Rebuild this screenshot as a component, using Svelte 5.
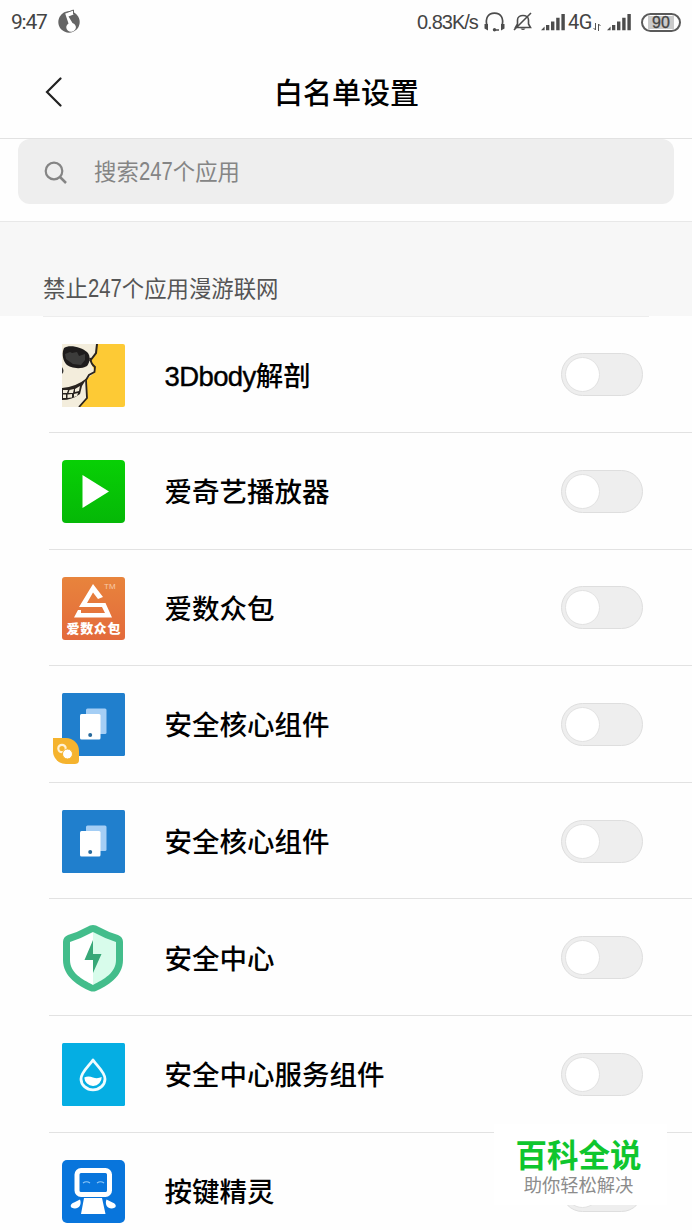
<script>
  let apps = $state([
    { name: '解剖', latin: '3Dbody', icon: 'skull', on: false },
    { name: '爱奇艺播放器', icon: 'play', on: false },
    { name: '爱数众包', icon: 'crowd', on: false },
    { name: '安全核心组件', icon: 'core', badge: true, on: false },
    { name: '安全核心组件', icon: 'core', on: false },
    { name: '安全中心', icon: 'shield', on: false },
    { name: '安全中心服务组件', icon: 'drop', on: false },
    { name: '按键精灵', icon: 'robot', on: false }
  ]);
</script>

{#snippet signal()}
  <svg class="signal" viewBox="0 0 24 18" width="24" height="18">
    <path d="M0 17.2 3.6 13.5v3.7zM5 12h3.3v5.200H5zM10 8.500h3.400v8.700H10zM15.200 4.700h3.400v12.500h-3.400zM20.400 1h3.400v16.200h-3.400z" fill="#4c4c4c" />
  </svg>
{/snippet}

{#snippet appIcon(kind)}
  <svg viewBox="0 0 63 63" width="63" height="63">
    {#if kind === 'skull'}
      <rect width="63" height="63" rx="2" fill="#fdca35" />
      <path d="M0 0H35L33 11 28 17 33 28 24 36 25 54 17 63H0z" fill="#f3eddc" />
      <path d="M35 0 34 9 28 17" fill="none" stroke="#29231f" stroke-width="2" />
      <path d="M28 14Q29 20 33 23L32.500 28 27 31 24 36 25 54 17 63" fill="none" stroke="#29231f" stroke-width="1.800" />
      <path d="M2 4C7 0 20 3 25 8 29 12 28 18 25 22 18 26 8 24 4 20 0 15 0 8 2 4z" fill="#1e1c1c" />
      <path d="M3 10 8 8l2 1 5-1 2 4 6-2v6l-4 5-8-1-7-5z" fill="#3c3c3b" />
      <path d="M0 23q3 4 0 7z" fill="#333" />
      <path d="M0 44Q14 43 25 34L20 42 18 50Q10 56 0 56z" fill="#28231f" />
      <path d="M1 46h5l-1 3H1zM7.500 46l4.500-1-1 4H6.500zM13 45l5-3-1 5-4 1zM1 50.500h3V54H1zM5.500 50.500l4.500-.5v3.500L5.500 54zM12 50l4-1-1 3-3 1z" fill="#f3eddc" />
    {:else if kind === 'play'}
      <defs>
        <linearGradient id="playFill" x2="0" y2="1">
          <stop stop-color="#08d005" /><stop offset="1" stop-color="#05b807" />
        </linearGradient>
      </defs>
      <rect width="63" height="63" rx="4" fill="url(#playFill)" />
      <path d="M20.5 15v33L47 31.5z" fill="#fff" />
    {:else if kind === 'crowd'}
      <defs>
        <linearGradient id="crowdFill" x2="0" y2="1">
          <stop stop-color="#e8843c" /><stop offset="1" stop-color="#e36a3c" />
        </linearGradient>
      </defs>
      <rect width="63" height="63" rx="3" fill="url(#crowdFill)" />
      <path d="M41 20 31 7 17 30H40L43 36H19V33H16L12 40.500H50L43.500 26H25L31 15.500 36 22z" fill="#fff" />
      <text x="42" y="12" class="tm">TM</text>
      <text x="4.5" y="56" class="crowd-name" textLength="54">爱数众包</text>
    {:else if kind === 'core'}
      <rect width="63" height="63" rx="1.5" fill="#207fcd" />
      <rect x="24" y="15.5" width="20.5" height="25.5" rx="1.5" fill="#a4cef5" />
      <rect x="18" y="21" width="20.5" height="25.5" rx="1.5" fill="#fff" />
      <circle cx="28.2" cy="42" r="2" fill="#286a9c" />
    {:else if kind === 'drop'}
      <rect width="63" height="63" rx="1.5" fill="#05aee3" />
      <path d="M31 17C27 23 19 29 19 36a12 10.800 0 0 0 24 0C43 29 35 23 31 17z" fill="none" stroke="#f0fcff" stroke-width="2.800" stroke-linejoin="round" />
      <path d="M22.300 34.500q4-2 8.700 0 4.500 1.500 8.700-.5a8.700 8.700 0 0 1-17.400.5z" fill="#fff" />
    {:else if kind === 'robot'}
      <rect width="63" height="63" rx="5" fill="#0875dc" />
      <rect x="15" y="10.500" width="32.500" height="24" rx="4" fill="none" stroke="#fff" stroke-width="5" />
      <path d="M21 23q3.500-2.500 7 0M35 23q3.500-2.500 7 0" fill="none" stroke="#91c9f7" stroke-width="1.200" />
      <path d="M22 38H40L43.500 54H19zM18 39.500c2 5-1 9-5 9-5 0-6-4-1-6zM44.500 39.500c-2 5 1 9 5 9 5 0 6-4 1-6z" fill="#fff" />
    {/if}
  </svg>
{/snippet}

{#snippet shieldIcon()}
  <svg viewBox="0 0 63 70" width="63" height="70">
    <path d="M31 2Q34 2 37 4 46 9 56 12 61 14 61 19V37C61 54 45 63 34 68Q31 69 28 68C17 63 1 54 1 37V19Q1 14 6 12 16 9 25 4 28 2 31 2z" fill="#43bd8b" />
    <path d="M31 9Q20 15 8 19V37C8 50 20 56 31 62z" fill="#fff" />
    <path d="M31 9Q42 15 54 19V37C54 50 42 56 31 62z" fill="#d8fceb" />
    <path d="M31 17 22.500 37H31V50L39.500 31H31z" fill="#38a878" />
  </svg>
{/snippet}

<div class="screen">
  <div class="status">
    <span class="time">9:47</span>
    <svg class="music" viewBox="0 0 23 24" width="23" height="24">
      <circle cx="11" cy="13" r="10.700" fill="#646464" />
      <path d="M7 4 15.500 1.200V5.500L10.500 7.500 14.500 14A4.800 4.500 0 1 1 10.500 14.500z" fill="#fff" />
      <path d="M7 4.200 15.500 1v4" fill="none" stroke="#646464" stroke-width="1" />
    </svg>
    <span class="speed">0.83K/s</span>
    <svg class="headset" viewBox="0 0 21 20" width="21" height="20">
      <path d="M3 14C1 6 4 1.200 10.500 1.200S20 6 18 14M15 18H10" fill="none" stroke="#4c4c4c" stroke-width="1.700" />
      <path d="M.5 12h3.500v6.500L.5 16.500zM20.500 12H17v6.500l3.500-2z" fill="#4c4c4c" />
      <circle cx="10.500" cy="17.700" r="1.700" fill="#4c4c4c" />
    </svg>
    <svg class="bell" viewBox="0 0 20 20" width="20" height="20">
      <path d="M2.500 15.500H17.500L15.500 12V8C15.500 2 4.500 2 4.500 8v4zM1 18 18 1" fill="none" stroke="#4c4c4c" stroke-width="1.600" />
      <path d="M7.500 16.500h5q-2.500 3-5 0z" fill="#4c4c4c" />
    </svg>
    {@render signal()}
    <span class="network">4G</span>
    <svg class="arrows" viewBox="0 0 8 8" width="8" height="8">
      <path d="M2.500 0v7L.5 5M5.500 8V1l2 2" fill="none" stroke="#555" />
    </svg>
    {@render signal()}
    <span class="battery"><span>90</span></span>
  </div>

  <header>
    <svg class="back" viewBox="0 0 18 30" width="18" height="30">
      <path d="M15.500 1.500 2 15 15.500 28.500" fill="none" stroke="#222" stroke-width="2.200" stroke-linecap="round" />
    </svg>
    <h1>白名单设置</h1>
  </header>

  <div class="search-area">
    <div class="search">
      <svg viewBox="0 0 24 24" width="24" height="24">
        <circle cx="10" cy="10" r="8.300" fill="none" stroke="#858585" stroke-width="2.200" />
        <path d="m16 16 6 6" stroke="#858585" stroke-width="2.500" />
      </svg>
      <span>搜索<b>247</b>个应用</span>
    </div>
  </div>

  <div class="section"><p>禁止<b>247</b>个应用漫游联网</p></div>

  <ul>
    {#each apps as app}
      <li>
        <div class="icon">
          {#if app.icon === 'shield'}
            {@render shieldIcon()}
          {:else}
            {@render appIcon(app.icon)}
          {/if}
          {#if app.badge}
            <svg class="badge" viewBox="0 0 26 26" width="26" height="26">
              <path d="M0 0H13A13 13 0 0 1 26 13V22Q26 26 22 26H13A13 13 0 0 1 0 13z" fill="#f5b32e" />
              <circle cx="9" cy="10.500" r="3.700" fill="none" stroke="#fff1d3" stroke-width="2.200" />
              <circle cx="14.500" cy="16" r="5" fill="#fff" stroke="#f5b32e" />
            </svg>
          {/if}
        </div>
        <span class="name">{#if app.latin}<i>{app.latin}</i>{/if}{app.name}</span>
        <button class="switch" class:on={app.on} role="switch" aria-checked={app.on} aria-label={app.name} onclick={() => (app.on = !app.on)}>
          <span></span>
        </button>
      </li>
    {/each}
  </ul>

  <div class="watermark">
    <strong>百科全说</strong>
    <span>助你轻松解决</span>
  </div>
</div>

<style>
  :global(body) {
    background: #fff;
    overflow: hidden;
  }

  .screen {
    position: relative;
    width: 692px;
    height: 1230px;
    overflow: hidden;
    font-family: "Liberation Sans", "Noto Sans CJK SC", sans-serif;
    color: #000;
    background: #fefefe;
  }

  .status {
    display: flex;
    align-items: center;
    height: 44px;
    padding: 0 11px;
    font-family: Roboto, sans-serif;
    font-size: 21px;
    color: #444;
  }

  .time {
    width: 47px;
    letter-spacing: -1.2px;
  }

  .music {
    margin-top: -2px;
  }

  .speed {
    margin-left: auto;
    width: 67px;
    white-space: nowrap;
    font-size: 20px;
    letter-spacing: -1px;
    font-family: "Liberation Sans", sans-serif;
  }

  .headset,
  .bell {
    margin-right: 8px;
  }

  .network {
    margin-left: 3px;
    width: 25px;
    font-size: 20px;
    letter-spacing: -0.5px;
  }

  .arrows {
    margin: 10px 6px 0 0;
  }

  .battery {
    box-sizing: border-box;
    width: 40px;
    height: 19px;
    margin-left: 10px;
    padding: 1px 5px;
    border: 2px solid #5a5a5a;
    border-radius: 10px;
  }

  .battery span {
    display: block;
    background: #cacaca;
    font-family: "Liberation Sans", sans-serif;
    font-size: 16px;
    line-height: 13px;
    text-align: center;
    -webkit-text-stroke: 0.3px;
  }

  header {
    display: flex;
    align-items: center;
    box-sizing: border-box;
    height: 95px;
    padding: 2px 45px 0;
    border-bottom: 1px solid #e2e2e2;
  }

  h1 {
    flex: 1;
    margin: -3px 17px 0 0;
    font-size: 29px;
    font-weight: 500;
    text-align: center;
  }

  .search-area {
    box-sizing: border-box;
    height: 83px;
    padding: 0 18px;
    border-bottom: 1px solid #e8e8e8;
  }

  .search {
    display: flex;
    align-items: center;
    gap: 26px;
    height: 65px;
    padding-left: 26px;
    border-radius: 12px;
    background: #eee;
    font-size: 22.4px;
    color: #858585;
  }

  .search svg {
    margin-top: 2px;
  }

  .search span {
    margin-top: -3px;
  }

  /* Digits are narrower and a little taller than the Latin face gives */
  b {
    display: inline-block;
    width: 34px;
    font-size: 25px;
    font-weight: inherit;
    line-height: 1;
    white-space: nowrap;
    transform: scaleX(0.81);
    transform-origin: left;
  }

  .section {
    box-sizing: border-box;
    height: 94px;
    padding: 0 43px;
    background: #f7f7f7;
    font-size: 22.4px;
    line-height: 136px;
    color: #555;
  }

  .section p {
    box-sizing: border-box;
    height: 95px;
    margin: 0;
    border-bottom: 1px solid #ededed;
  }

  ul {
    margin: 0;
    padding: 0 0 0 49px;
    list-style: none;
  }

  li {
    display: flex;
    align-items: center;
    box-sizing: border-box;
    height: 116.6px;
    padding: 1px 49px 0 13px;
    border-bottom: 1px solid #e2e2e2;
  }

  li:first-child {
    height: 117px;
  }

  .icon {
    position: relative;
    display: flex;
    width: 63px;
    margin: 1px 39.5px 0 0;
  }

  .badge {
    position: absolute;
    left: -9px;
    bottom: -8px;
  }

  .tm {
    font: 8px "Liberation Sans", sans-serif;
    fill: #f8cba8;
  }

  .crowd-name {
    font: 900 13px "Noto Sans CJK SC", sans-serif;
    fill: #fff;
  }

  .name {
    margin-top: -2px;
    font-size: 27.5px;
    font-weight: 500;
  }

  .name i {
    font-style: normal;
    letter-spacing: -0.6px;
    -webkit-text-stroke: 0.4px;
  }

  .switch {
    display: flex;
    align-items: center;
    box-sizing: border-box;
    width: 82px;
    height: 43px;
    margin-left: auto;
    padding: 0 3px;
    border: 1px solid #dedede;
    border-radius: 22px;
    background: #eee;
  }

  .switch span {
    box-sizing: border-box;
    width: 35px;
    height: 35px;
    border: 1px solid #e2e2e2;
    border-radius: 50%;
    background: #fff;
  }

  .switch.on {
    justify-content: flex-end;
    background: #2f8df5;
  }

  .watermark {
    position: absolute;
    left: 494px;
    top: 1124px;
    display: flex;
    flex-direction: column;
    align-items: center;
    width: 173px;
    height: 81px;
    padding: 9px 4px 0 0;
    box-sizing: border-box;
    background: #fff;
    font-family: "Noto Sans CJK SC", sans-serif;
  }

  .watermark strong {
    font-size: 31.5px;
    line-height: 40px;
    font-weight: 700;
    color: #0fc62e;
  }

  .watermark span {
    font-size: 18.3px;
    line-height: 23px;
    color: #8c8c8c;
  }
</style>
